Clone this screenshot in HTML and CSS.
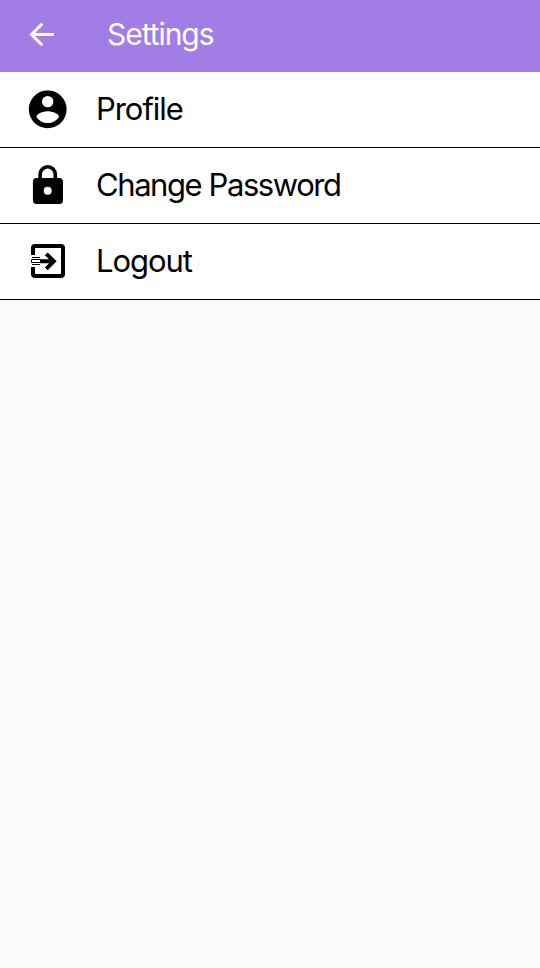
FILE: index.html
```html
<!DOCTYPE html>
<html lang="en">
<head>
<meta charset="utf-8">
<title>Settings</title>
<link rel="stylesheet" href="styles.css">
</head>
<body>
<header class="bar">
  <svg class="back" viewBox="0 0 28 28" aria-hidden="true"><path d="M26 14.5H4M14.3 3.7L3.5 14.5L14.3 25.3"/></svg>
  <h1 class="title">Settings</h1>
</header>
<main class="list">
  <a class="row">
    <svg class="icon" viewBox="0 0 40 40" aria-hidden="true"><path fill-rule="evenodd" d="M19.7 1.4a18.9 18.9 0 1 0 0 37.8a18.9 18.9 0 1 0 0-37.8zM19.7 6.9a5.7 5.7 0 1 1 0 11.4a5.7 5.7 0 1 1 0-11.4zM19.7 34.1c-4.7 0-8.9-2.4-11.3-6.1c.1-3.7 7.5-5.8 11.3-5.8s11.2 2.1 11.3 5.8c-2.4 3.7-6.6 6.1-11.3 6.1z"/></svg>
    <span class="label">Profile</span>
  </a>
  <a class="row">
    <svg class="icon" viewBox="0 0 40 40" aria-hidden="true"><path fill-rule="evenodd" d="M31.3 13h-2.2V9.4a9.4 9.4 0 0 0-18.8 0V13H8.6A3.7 3.7 0 0 0 4.9 16.7v18.6A3.7 3.7 0 0 0 8.6 39h22.7a3.7 3.7 0 0 0 3.7-3.7V16.7a3.7 3.7 0 0 0-3.7-3.7zM19.7 29.8a4 4 0 1 1 0-8a4 4 0 0 1 0 8zM25.5 13H13.9V9.4a5.8 5.8 0 0 1 11.6 0z"/></svg>
    <span class="label password">Change Password</span>
  </a>
  <a class="row">
    <svg class="icon" viewBox="0 0 40 40" aria-hidden="true">
      <g class="exit"><path d="M5 14V7a2 2 0 0 1 2-2h26a2 2 0 0 1 2 2v26a2 2 0 0 1-2 2H7a2 2 0 0 1-2-2v-7"/><path d="M12 20.3h13M18.3 12.8l7.5 7.5l-7.5 7.5"/></g>
      <path class="speed" d="M4 16.5h8M3.5 18.5h9v3h-9zM4 23.5h8"/>
    </svg>
    <span class="label">Logout</span>
  </a>
</main>
</body>
</html>
```
FILE: styles.css
```css
* { box-sizing: border-box; }
body {
  margin: 0;
  min-height: 100vh;
  background: #fafafa;
  color: #000;
  font-family: Inter, "Liberation Sans", sans-serif;
}
.bar {
  display: flex;
  align-items: center;
  height: 72px;
  padding: 0 28px 4px;
  background: #a27de6;
  color: #fff;
}
.back {
  width: 28px;
  height: 28px;
  fill: none;
  stroke: #fff;
  stroke-width: 3;
}
.title {
  margin: 0 0 0 51px;
  font-size: 30px;
  font-weight: 400;
  line-height: 36px;
  letter-spacing: -1.05px;
}
.row {
  display: flex;
  align-items: center;
  gap: 28px;
  height: 76px;
  padding: 0 28px 1px;
  background: #fff;
  border-bottom: 1px solid #000;
}
.icon {
  width: 40px;
  height: 40px;
}
.exit {
  fill: none;
  stroke: #000;
  stroke-width: 4;
}
.speed {
  fill: #fff;
  stroke: #000;
  stroke-width: 1;
}
.label {
  font-size: 31px;
  line-height: 38px;
  letter-spacing: -1.05px;
}
.password {
  letter-spacing: -1.42px;
}
```
